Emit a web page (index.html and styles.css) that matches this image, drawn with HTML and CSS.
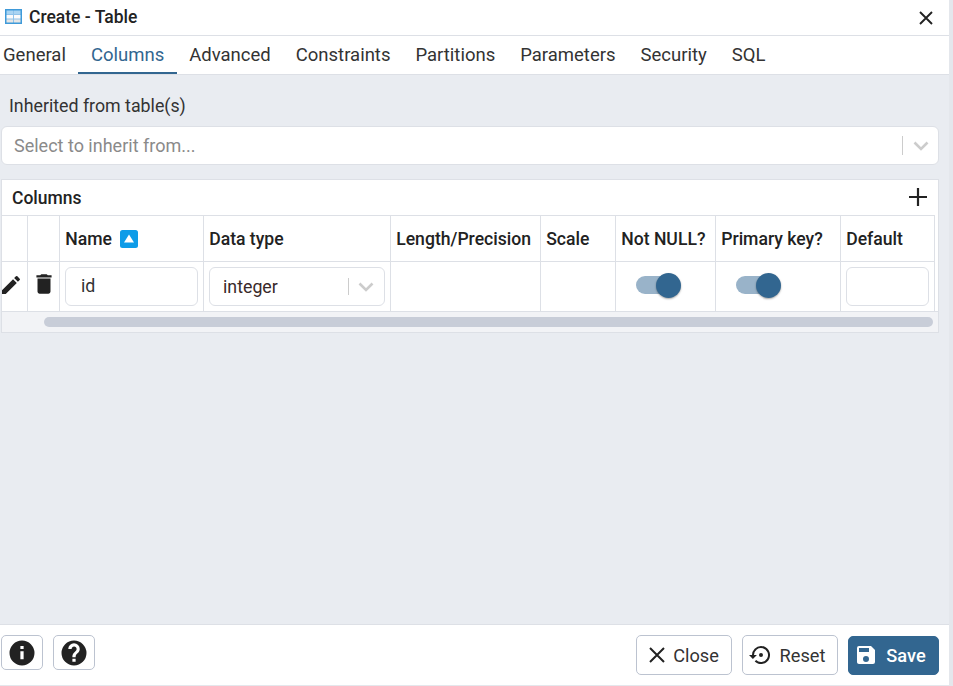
FILE: index.html
```html
<!DOCTYPE html>
<html lang="en">
<head>
    <meta charset="UTF-8">
    <title>Create - Table</title>
    <link rel="stylesheet" href="styles.css">
</head>
<body>
    <div class="dialog">
        <div class="title-bar">
            <svg class="table-icon" width="17" height="15" viewBox="0 0 17 15">
                <rect x="1" y="1" width="15" height="4" fill="#a9d4f2"/>
                <rect x="1" y="5" width="15" height="9" fill="#fbfbfb"/>
                <rect x="1" y="10" width="15" height="4" fill="#e6e6e6"/>
                <path d="M1 5.500h15M1 10h15M8.500 1v13" stroke="#8fc3ea" fill="none"/>
                <rect x="0.750" y="0.750" width="15.500" height="13.500" fill="none" stroke="#3f9ad9" stroke-width="1.500"/>
            </svg>
            <span class="title-text">Create - Table</span>
            <svg class="close-x" width="14" height="14" viewBox="0 0 14 14">
                <path d="M1 1l12 12M13 1L1 13" stroke="#222" stroke-width="1.9" fill="none"/>
            </svg>
        </div>

        <div class="tabs">
            <span class="tab">General</span>
            <span class="tab active">Columns</span>
            <span class="tab">Advanced</span>
            <span class="tab">Constraints</span>
            <span class="tab">Partitions</span>
            <span class="tab">Parameters</span>
            <span class="tab">Security</span>
            <span class="tab">SQL</span>
        </div>

        <div class="content">
            <label class="field-label">Inherited from table(s)</label>
            <div class="select-box">
                <span class="placeholder">Select to inherit from...</span>
                <span class="select-sep"></span>
                <svg class="chevron" width="16" height="10" viewBox="0 0 16 10">
                    <path d="M1.500 1.500L8 8l6.500-6.500" stroke="#ccc" stroke-width="2.600" fill="none"/>
                </svg>
            </div>

            <div class="columns-panel">
                <div class="panel-head">
                    <span class="panel-title">Columns</span>
                    <svg class="plus" width="18" height="18" viewBox="0 0 18 18">
                        <path d="M9 0v18M0 9h18" stroke="#222" stroke-width="2.200" fill="none"/>
                    </svg>
                </div>
                <div class="grid">
                    <div class="th"></div>
                    <div class="th"></div>
                    <div class="th">Name
                        <svg class="sort" width="18" height="18" viewBox="0 0 18 18">
                            <rect width="18" height="18" rx="2.500" fill="#0e9ce8"/>
                            <path d="M9 4.500L14 12.500H4z" fill="#fff"/>
                        </svg>
                    </div>
                    <div class="th">Data type</div>
                    <div class="th">Length/Precision</div>
                    <div class="th">Scale</div>
                    <div class="th">Not NULL?</div>
                    <div class="th">Primary key?</div>
                    <div class="th">Default</div>

                    <div class="td icon-cell">
                        <svg class="pencil" width="24" height="24" viewBox="0 0 24 24">
                            <path d="M3 17.250V21h3.750L17.810 9.940l-3.750-3.750L3 17.250zM20.710 7.040a1 1 0 0 0 0-1.410l-2.340-2.340a1 1 0 0 0-1.410 0l-1.830 1.830 3.750 3.750 1.830-1.830z" fill="#222"/>
                        </svg>
                    </div>
                    <div class="td icon-cell">
                        <svg class="trash" width="26" height="26" viewBox="0 0 24 24">
                            <path d="M6 19c0 1.100.9 2 2 2h8c1.100 0 2-.9 2-2V7H6v12zM19 4h-3.500l-1-1h-5l-1 1H5v2h14V4z" fill="#222"/>
                        </svg>
                    </div>
                    <div class="td"><div class="cell-input name-input">id</div></div>
                    <div class="td">
                        <div class="cell-input type-input">
                            <span class="type-value">integer</span>
                            <span class="select-sep short"></span>
                            <svg class="chevron" width="16" height="10" viewBox="0 0 16 10">
                                <path d="M1.500 1.500L8 8l6.500-6.500" stroke="#ccc" stroke-width="2.600" fill="none"/>
                            </svg>
                        </div>
                    </div>
                    <div class="td"></div>
                    <div class="td"></div>
                    <div class="td"><span class="switch"><span class="knob"></span></span></div>
                    <div class="td"><span class="switch"><span class="knob"></span></span></div>
                    <div class="td"><div class="cell-input"></div></div>
                </div>
                <div class="scroll-row"><div class="scroll-thumb"></div></div>
            </div>
        </div>

        <div class="footer">
            <button class="btn icon-btn">
                <svg width="30" height="30" viewBox="0 0 24 24">
                    <path d="M12 2a10 10 0 1 0 0 20 10 10 0 0 0 0-20zm1.300 15h-2.600v-6.500h2.600V17zm0-8.300h-2.600V6.300h2.600v2.400z" fill="#222"/>
                </svg>
            </button>
            <button class="btn icon-btn">
                <svg width="30" height="30" viewBox="0 0 24 24">
                    <path d="M12 2a10 10 0 1 0 0 20 10 10 0 0 0 0-20zm1.300 17h-2.600v-2.500h2.600V19zm2.400-7.700l-1.100 1.100c-.9.900-1.300 1.500-1.300 2.900h-2.600v-.6c0-1.200.5-2.200 1.300-3l1.500-1.500c.4-.4.600-.9.600-1.400 0-1.100-.9-2-2-2s-2 .9-2 2H7.400a4.600 4.600 0 0 1 9.200 0c0 .9-.4 1.800-.9 2.500z" fill="#222"/>
                </svg>
            </button>
            <span class="spacer"></span>
            <button class="btn close-btn">
                <svg width="16" height="16" viewBox="0 0 16 16">
                    <path d="M1 1l14 14M15 1L1 15" stroke="#222" stroke-width="2" fill="none"/>
                </svg>
                Close
            </button>
            <button class="btn reset-btn">
                <svg width="24" height="24" viewBox="0 0 24 24">
                    <path d="M13 3a9 9 0 0 0-9 9H1l3.900 3.900L8.900 12H6a7 7 0 1 1 2.100 5l-1.400 1.400A9 9 0 1 0 13 3zm0 7a2 2 0 1 0 0 4 2 2 0 0 0 0-4z" fill="#222"/>
                </svg>
                Reset
            </button>
            <button class="btn primary">
                <svg width="24" height="24" viewBox="0 0 24 24">
                    <path d="M17 3H5a2 2 0 0 0-2 2v14c0 1.100.9 2 2 2h14a2 2 0 0 0 2-2V7l-4-4zm-5 16a3 3 0 1 1 0-6 3 3 0 0 1 0 6zm3-10H5V5h10v4z" fill="#fff"/>
                </svg>
                Save
            </button>
        </div>
    </div>
</body>
</html>
```

FILE: styles.css
```css
html, body {
    height: 100%;
}

body {
    margin: 0;
    background-color: #e4e7ec;
    font-family: Roboto, "Liberation Sans", sans-serif;
    color: #222;
    overflow: hidden;
}

.dialog {
    width: 949px;
    height: 685px;
    background-color: #fff;
    display: flex;
    flex-direction: column;
    border-radius: 0 0 4px 0;
}

.title-bar {
    height: 36px;
    box-sizing: border-box;
    border-bottom: 1px solid #dde0e6;
    display: flex;
    align-items: center;
    padding: 0 16px 2px 5px;
}

.table-icon {
    margin-right: 7px;
}

.title-text {
    font-size: 17.500px;
    font-weight: 500;
    flex: 1;
}

.close-x {
    margin-top: 2px;
}

.tabs {
    height: 39px;
    box-sizing: border-box;
    border-bottom: 1px solid #dde0e6;
    display: flex;
    font-size: 18.500px;
    color: #333;
}

.tab {
    display: flex;
    align-items: center;
    padding: 1px 12.500px 0;
    box-sizing: border-box;
    height: 38px;
    border-bottom: 2px solid transparent;
}

.tab:first-child {
    padding-left: 3px;
}

.tab.active {
    color: #326690;
    border-bottom-color: #326690;
}

.content {
    flex: 1;
    background-color: #e9ecf1;
    padding: 0 10px 0 1px;
    display: flex;
    flex-direction: column;
}

.field-label {
    font-size: 17.800px;
    color: #333;
    margin: 21px 0 0 8px;
    line-height: 20px;
}

.select-box {
    margin-top: 10px;
    height: 37px;
    background-color: #fff;
    border: 1px solid #dde0e6;
    border-radius: 6px;
    display: flex;
    align-items: center;
    padding: 0 9px 0 12px;
}

.placeholder {
    flex: 1;
    font-size: 18px;
    color: #8a8a8a;
}

.select-sep {
    width: 1px;
    height: 19px;
    background-color: #ccc;
    margin-right: 10px;
}

.select-sep.short {
    height: 17px;
    margin-right: 9px;
}

.columns-panel {
    margin-top: 14px;
    background-color: #fff;
    border: 1px solid #dde0e6;
}

.panel-head {
    height: 35px;
    display: flex;
    align-items: center;
    justify-content: space-between;
    padding: 0 11px 0 10px;
}

.panel-title {
    font-size: 17.500px;
    font-weight: 500;
}

.plus {
    margin-top: -2px;
}

.grid {
    display: grid;
    grid-template-columns: 26px 32px 144px 187px 150px 75px 100px 125px 94px;
    grid-template-rows: 46px 49px;
    border-top: 1px solid #dde0e6;
    margin-right: 3px;
}

.th,
.td {
    border-right: 1px solid #dde0e6;
    display: flex;
    align-items: center;
    box-sizing: border-box;
    min-width: 0;
}

.th {
    border-bottom: 1px solid #dde0e6;
    padding-left: 5.200px;
    font-size: 17.600px;
    font-weight: 500;
    white-space: nowrap;
}

.td {
    padding: 0 5px;
}

.sort {
    margin-left: 8px;
}

.icon-cell {
    padding: 0;
    justify-content: center;
}

.pencil {
    margin: -4px 0 0 -7px;
}

.trash {
    margin-top: -5px;
}

.cell-input {
    width: 100%;
    height: 39px;
    box-sizing: border-box;
    background-color: #fff;
    border: 1px solid #dde0e6;
    border-radius: 6px;
    display: flex;
    align-items: center;
    font-size: 17.800px;
    color: #333;
}

.name-input {
    padding: 0 0 2px 15px;
}

.type-input {
    padding: 0 10px 0 13px;
}

.type-value {
    flex: 1;
    color: #3a2a2a;
}

.switch {
    position: relative;
    width: 38px;
    height: 18px;
    margin: -3px 0 0 15px;
    background-color: #99b3c9;
    border-radius: 9px;
}

.knob {
    position: absolute;
    top: -3px;
    right: -7px;
    width: 25px;
    height: 25px;
    background-color: #326690;
    border-radius: 50%;
    box-shadow: 0 1px 2px rgba(0, 0, 0, 0.35);
}

.scroll-row {
    height: 21px;
    background-color: #f2f3f6;
    border-top: 1px solid #dde0e6;
    box-sizing: border-box;
    padding: 5px 5px 0 42px;
}

.scroll-thumb {
    height: 10px;
    background-color: #c8cdd8;
    border-radius: 5px;
}

.footer {
    height: 60px;
    border-top: 1px solid #dde0e6;
    background-color: #fff;
    display: flex;
    align-items: center;
    gap: 10px;
    padding: 0 10px 0 1px;
}

.spacer {
    flex: 1;
}

.btn {
    height: 40px;
    box-sizing: border-box;
    background-color: #fff;
    border: 1px solid #bcc3d0;
    border-radius: 5px;
    display: flex;
    align-items: center;
    justify-content: center;
    gap: 8px;
    padding: 0;
    font-family: inherit;
    font-size: 18.200px;
    color: #333;
}

.icon-btn {
    width: 42px;
    height: 35px;
    margin-top: -5px;
}

.close-btn {
    width: 96px;
}

.reset-btn {
    width: 96px;
    padding-right: 7px;
}

.primary {
    width: 91px;
    height: 39px;
    padding-right: 7px;
    background-color: #326690;
    border-color: #326690;
    color: #fff;
    font-weight: 500;
}
```
